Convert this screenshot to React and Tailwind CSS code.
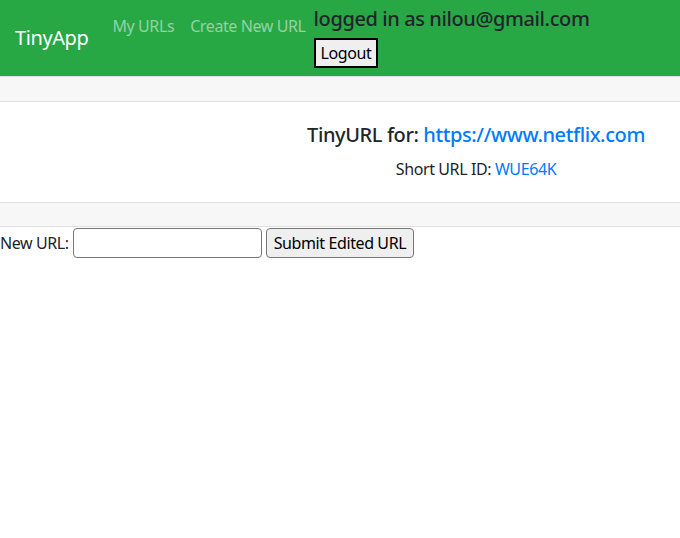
const App = () => {
  const url = 'https://www.netflix.com';
  const shortId = 'WUE64K';

  return (
    <div className="w-[680px] overflow-hidden bg-white text-[#212529] font-['Noto_Sans',sans-serif] text-base tracking-[-0.025em]">
      <nav className="flex items-center h-[76px] px-[15px] py-2 bg-[#28a745]">
        <a className="text-white text-[20px] leading-[30px] mr-4">TinyApp</a>
        <ul className="flex self-start">
          <li><a className="block px-2 py-1.5 leading-6 text-[#93d3a2]">My URLs</a></li>
          <li><a className="block px-2 py-1.5 leading-6 text-[#93d3a2]">Create New URL</a></li>
        </ul>
        <div className="self-start">
          <h5 className="text-[20px] leading-6 font-medium mb-[7px] -mt-px">logged in as nilou@gmail.com</h5>
          <form>
            <button type="button" className="h-[30px] px-[5px] border-2 border-black bg-[#efefef] text-black leading-6">
              Logout
            </button>
          </form>
        </div>
      </nav>

      <div className="w-[952px] border-y border-[#dfdfdf] text-center">
        <div className="h-[25px] bg-[#f7f7f7] border-b border-[#dfdfdf]" />
        <div className="h-[100px] pt-[21px]">
          <h5 className="text-[20px] leading-6 font-medium mb-[10px]">
            TinyURL for: <a className="text-[#007bff]">{url}</a>
          </h5>
          <p className="leading-6">
            Short URL ID: <a className="text-[#007bff]">{shortId}</a>
          </p>
        </div>
        <div className="h-[24px] bg-[#f7f7f7] border-t border-[#dfdfdf]" />
      </div>

      <form className="flex items-center gap-1 mt-px">
        <label>New URL:</label>
        <input type="text" className="w-[189px] h-[30px] border border-[#767676] rounded-sm bg-white" />
        <button type="button" className="h-[30px] px-[7px] border border-[#767676] rounded-sm bg-[#efefef] text-black">
          Submit Edited URL
        </button>
      </form>
    </div>
  );
};

export default App;
